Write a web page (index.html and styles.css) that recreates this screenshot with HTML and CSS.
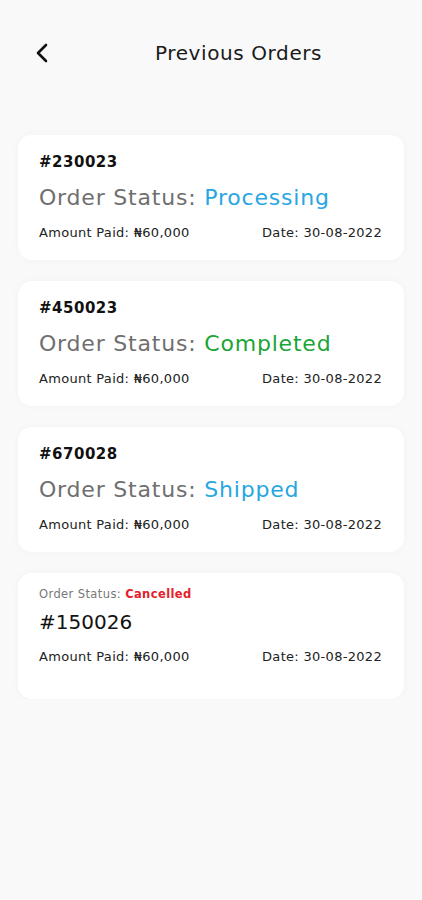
FILE: index.html
```html
<!DOCTYPE html>
<html lang="en">
<head>
    <meta charset="UTF-8">
    <meta name="viewport" content="width=device-width, initial-scale=1.0">
    <title>Previous Orders</title>
    <link rel="stylesheet" href="styles.css">
</head>
<body>
 <div class="wrapper">
    <div class="top-bar">
        <span class="back">
            <svg width="14" height="20" viewBox="0 0 14 20"><path d="M11 2 L3 10 L11 18" fill="none" stroke="#111" stroke-width="2.6" stroke-linecap="round" stroke-linejoin="round"/></svg>
        </span>
        <h1>Previous Orders</h1>
    </div>

    <div class="orders">
        <div class="order-card">
            <div class="order-id">#230023</div>
            <div class="order-status">Order Status: <span class="blue">Processing</span></div>
            <div class="order-meta">
                <span>Amount Paid: ₦60,000</span>
                <span>Date: 30-08-2022</span>
            </div>
        </div>

        <div class="order-card">
            <div class="order-id">#450023</div>
            <div class="order-status">Order Status: <span class="green">Completed</span></div>
            <div class="order-meta">
                <span>Amount Paid: ₦60,000</span>
                <span>Date: 30-08-2022</span>
            </div>
        </div>

        <div class="order-card">
            <div class="order-id">#670028</div>
            <div class="order-status">Order Status: <span class="blue">Shipped</span></div>
            <div class="order-meta">
                <span>Amount Paid: ₦60,000</span>
                <span>Date: 30-08-2022</span>
            </div>
        </div>

        <div class="order-card cancelled">
            <div class="small-status">Order Status: <span class="red">Cancelled</span></div>
            <div class="big-id">#150026</div>
            <div class="order-meta">
                <span>Amount Paid: ₦60,000</span>
                <span>Date: 30-08-2022</span>
            </div>
        </div>
    </div>
 </div>
</body>
</html>
```

FILE: styles.css
```css
body {
    margin: 0;
    background-color: #f9f9f9;
    font-family: "DejaVu Sans", "Open Sans", sans-serif;
    color: #111;
}

.wrapper {
    display: flex;
    flex-direction: column;
}

.top-bar {
    display: flex;
    align-items: center;
    height: 40px;
    margin-top: 33px;
    padding: 0 18px 0 35px;
}

.back {
    display: flex;
    width: 14px;
}

.top-bar h1 {
    margin: 0 0 0 106px;
    font-size: 20px;
    font-weight: 500;
    letter-spacing: 0.6px;
    color: #1a1a1a;
}

.orders {
    display: flex;
    flex-direction: column;
    gap: 21px;
    padding: 62px 18px 0 18px;
}

.order-card {
    background-color: #fff;
    border-radius: 14px;
    height: 125px;
    box-sizing: border-box;
    padding: 16px 22px 0 21px;
    box-shadow: 0 0 8px rgba(0, 0, 0, 0.03);
}

.order-id {
    font-size: 15px;
    font-weight: 700;
    letter-spacing: 0.5px;
    line-height: 22px;
}

.order-status {
    margin-top: 10px;
    font-size: 22px;
    letter-spacing: 0.8px;
    line-height: 30px;
    color: #6f6f6f;
}

.order-meta {
    display: flex;
    justify-content: space-between;
    margin-top: 10px;
    font-size: 13px;
    letter-spacing: 0.3px;
    line-height: 20px;
    color: #222;
}

.small-status {
    font-size: 11.5px;
    letter-spacing: 0.4px;
    line-height: 16px;
    color: #777;
    margin-top: -3px;
}

.big-id {
    margin-top: 6px;
    font-size: 20px;
    line-height: 28px;
}

.order-card.cancelled {
    height: 126px;
}

.order-card.cancelled .order-meta {
    margin-top: 11px;
}

.blue {
    color: #27a6e2;
}

.green {
    color: #1aa535;
}

.red {
    color: #e5202b;
    font-weight: 700;
}
```
